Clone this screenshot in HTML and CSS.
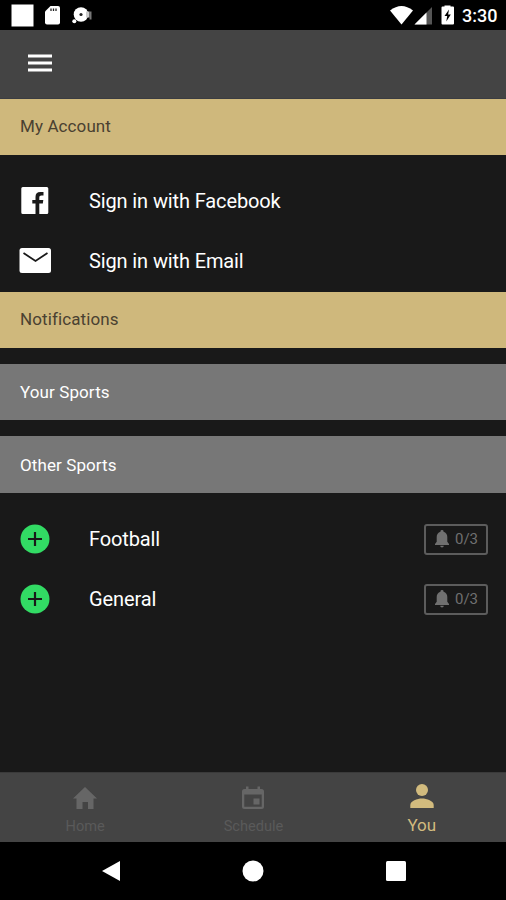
FILE: index.html
```html
<!DOCTYPE html>
<html lang="en">
<head>
    <meta charset="UTF-8">
    <meta name="viewport" content="width=device-width, initial-scale=1.0">
    <title>You</title>
    <link rel="stylesheet" href="styles.css">
</head>
<body>
    <div class="status-bar">
        <svg class="notices" width="100" height="30" viewBox="0 0 100 30">
            <rect x="11.5" y="4.5" width="22" height="22" fill="#fff"/>
            <path d="M50.500 6H58a2 2 0 0 1 2 2v14.500a2 2 0 0 1-2 2H47a2 2 0 0 1-2-2V11.500z" fill="#fff"/>
            <path d="M51 8.500v2.500M53.500 8.500v2.500M56 8.500v2.500" stroke="#222" stroke-width="1.300"/>
            <circle cx="81" cy="14.500" r="7.300" fill="#fff"/>
            <circle cx="81" cy="14.500" r="1.600" fill="#222"/>
            <circle cx="74.300" cy="21.300" r="2" fill="#fff"/>
            <rect x="86" y="11.500" width="3.500" height="6" fill="#ccc"/>
            <rect x="89.500" y="11.500" width="2" height="8" fill="#777"/>
        </svg>
        <svg class="signals" width="68" height="30" viewBox="388 0 68 30">
            <path d="M390 10.500Q401.500 1.500 413 10.500L401.500 24.500z" fill="#fff"/>
            <path d="M432 7v17.500H414.500z" fill="#555"/>
            <path d="M426.500 12.500v12H414.500z" fill="#fff"/>
            <path d="M444.500 6.500v-1h6v1h2.500a1 1 0 0 1 1 1v16a1 1 0 0 1-1 1h-10.500a1 1 0 0 1-1-1v-16a1 1 0 0 1 1-1z" fill="#fff"/>
            <path d="M449 9.500l-4.500 6.500h2.700l-.9 5.500 4.500-7h-2.700z" fill="#000"/>
        </svg>
        <span class="clock">3:30</span>
    </div>

    <header class="toolbar">
        <svg class="menu-icon" width="24" height="18" viewBox="0 0 24 18">
            <path d="M0 2h24M0 9h24M0 16h24" stroke="#fff" stroke-width="3"/>
        </svg>
    </header>

    <main class="content">
        <h2 class="heading gold">My Account</h2>
        <ul class="list">
            <li class="row">
                <svg class="row-icon" width="32" height="32" viewBox="0 0 32 32">
                    <path d="M3.800 2h24a1.500 1.500 0 0 1 1.500 1.500v24a1.500 1.500 0 0 1-1.500 1.500H20.300V18.500h3.500l.5-3.500h-4v-2.300c0-1.500.6-2.200 2.200-2.200h2V7h-3.200c-3.200 0-4.800 1.900-4.800 4.900V15h-3.200v3.500h3.200V29H3.800a1.500 1.500 0 0 1-1.500-1.500v-24A1.500 1.500 0 0 1 3.800 2z" fill="#fff"/>
                </svg>
                <span class="row-label">Sign in with Facebook</span>
            </li>
            <li class="row">
                <svg class="row-icon" width="32" height="32" viewBox="0 0 32 32">
                    <rect x=".5" y="3" width="31.500" height="25" rx="2.500" fill="#fff"/>
                    <path d="M4.500 8l12 8 12-8" fill="none" stroke="#191919" stroke-width="1.800"/>
                </svg>
                <span class="row-label">Sign in with Email</span>
            </li>
        </ul>

        <h2 class="heading gold">Notifications</h2>
        <h3 class="heading grey">Your Sports</h3>
        <h3 class="heading grey last">Other Sports</h3>
        <ul class="list">
            <li class="row">
                <svg class="row-icon" width="32" height="32" viewBox="0 0 32 32">
                    <circle cx="16" cy="16" r="14.500" fill="#32db64"/>
                    <path d="M16 9v14M9 16h14" stroke="#191919" stroke-width="2.200"/>
                </svg>
                <span class="row-label">Football</span>
                <button class="alerts">
                    <svg width="14" height="18" viewBox="0 0 14 18">
                        <path d="M7 0a1.500 1.500 0 0 1 1.500 1.700C11 2.400 12.300 4.500 12.300 7v4.800L14 14v1H0v-1l1.700-2.200V7c0-2.500 1.300-4.600 3.800-5.300A1.500 1.500 0 0 1 7 0zM5.200 15.800h3.600a1.800 1.800 0 0 1-3.600 0z"/>
                    </svg>
                    0/3
                </button>
            </li>
            <li class="row">
                <svg class="row-icon" width="32" height="32" viewBox="0 0 32 32">
                    <circle cx="16" cy="16" r="14.500" fill="#32db64"/>
                    <path d="M16 9v14M9 16h14" stroke="#191919" stroke-width="2.200"/>
                </svg>
                <span class="row-label">General</span>
                <button class="alerts">
                    <svg width="14" height="18" viewBox="0 0 14 18">
                        <path d="M7 0a1.500 1.500 0 0 1 1.500 1.700C11 2.400 12.300 4.500 12.300 7v4.800L14 14v1H0v-1l1.700-2.200V7c0-2.500 1.300-4.600 3.800-5.300A1.500 1.500 0 0 1 7 0zM5.200 15.800h3.600a1.800 1.800 0 0 1-3.600 0z"/>
                    </svg>
                    0/3
                </button>
            </li>
        </ul>
    </main>

    <nav class="tabs">
        <a class="tab">
            <svg width="24" height="24" viewBox="0 0 24 24">
                <path d="M12 1L24 12.500h-3.500V23H15v-7H9.500v7H3.500V12.500H0z"/>
            </svg>
            <span>Home</span>
        </a>
        <a class="tab">
            <svg width="24" height="24" viewBox="0 0 24 24">
                <path fill-rule="evenodd" d="M5 .5h2.500V3h9V.5H19V3h1.500A2.500 2.500 0 0 1 23 5.500v15a2.500 2.500 0 0 1-2.500 2.500h-17A2.500 2.500 0 0 1 1 20.500v-15A2.500 2.500 0 0 1 3.500 3H5zM3.300 8.500v12.200h17.400V8.500zM12.500 12.500h6v6h-6z"/>
            </svg>
            <span>Schedule</span>
        </a>
        <a class="tab active">
            <svg width="24" height="24" viewBox="0 0 24 24">
                <circle cx="12" cy="6" r="6"/>
                <path d="M.3 24v-3c0-4 7-6.500 11.700-6.500S23.700 17 23.700 21v3z"/>
            </svg>
            <span>You</span>
        </a>
    </nav>

    <div class="system-nav">
        <svg width="18" height="20" viewBox="0 0 18 20"><path d="M18 0v20L0 10z" fill="#fff"/></svg>
        <svg width="22" height="22" viewBox="0 0 22 22"><circle cx="11" cy="11" r="10.500" fill="#fff"/></svg>
        <svg width="20" height="20" viewBox="0 0 20 20"><rect width="20" height="20" rx="1.500" fill="#fff"/></svg>
    </div>
</body>
</html>
```
FILE: styles.css
```css
* {
    box-sizing: border-box;
}
body {
    margin: 0;
    height: 900px;
    display: flex;
    flex-direction: column;
    font-family: Roboto, sans-serif;
    background: #191919;
    color: #fff;
    overflow: hidden;
}
svg {
    display: block;
    flex-shrink: 0;
}
.status-bar {
    display: flex;
    align-items: center;
    height: 30px;
    background: #000;
}
.signals {
    margin-left: auto;
}
.clock {
    width: 50px;
    padding-left: 6px;
    padding-top: 2px;
    font-size: 18px;
    font-weight: 500;
    line-height: 28px;
}
.toolbar {
    display: flex;
    align-items: center;
    height: 69px;
    padding: 0 28px 3px;
    background: #444;
    border-bottom: 1px solid #3b3d42;
}
.content {
    flex: 1;
}
.heading {
    margin: 0;
    height: 56px;
    padding-left: 20px;
    font-size: 17px;
    font-weight: 400;
    line-height: 55px;
}
.gold {
    background: #cfb87c;
    color: #4a4131;
    letter-spacing: 0.1px;
}
.grey {
    margin-top: 16px;
    background: #777;
    letter-spacing: 0.1px;
    line-height: 57px;
}
.last {
    height: 57px;
    line-height: 58px;
}
.list {
    margin: 0;
    padding: 16px 0 1px;
    list-style: none;
}
.row {
    display: flex;
    align-items: center;
    height: 60px;
    padding: 0 18px 0 19px;
}
.row-label {
    flex: 1;
    margin-left: 38px;
    font-size: 20px;
    letter-spacing: -0.12px;
}
.alerts {
    display: flex;
    align-items: center;
    gap: 6px;
    width: 64px;
    height: 31px;
    padding: 0 0 0 9px;
    border: 2px solid #5c5c5c;
    border-radius: 3px;
    background: none;
    color: #707070;
    font-family: inherit;
    font-size: 15px;
}
.alerts svg,
.tab svg {
    fill: currentColor;
}
.tabs {
    display: flex;
    height: 70px;
    padding-left: 1px;
    background: #444;
    border-top: 1px solid #3a3a3a;
}
.tab {
    flex: 1;
    display: flex;
    flex-direction: column;
    align-items: center;
    padding-top: 13px;
    color: #666;
    font-size: 14.6px;
}
.tab span {
    margin-top: 7px;
    line-height: 18px;
    color: #5a5a5a;
}
.active {
    padding-top: 11px;
    color: #d2bb7e;
    font-size: 17px;
}
.active span {
    margin-top: 8px;
    color: inherit;
}
.system-nav {
    display: flex;
    align-items: center;
    justify-content: space-between;
    height: 58px;
    padding: 0 100px 0 102px;
    background: #000;
}
```
